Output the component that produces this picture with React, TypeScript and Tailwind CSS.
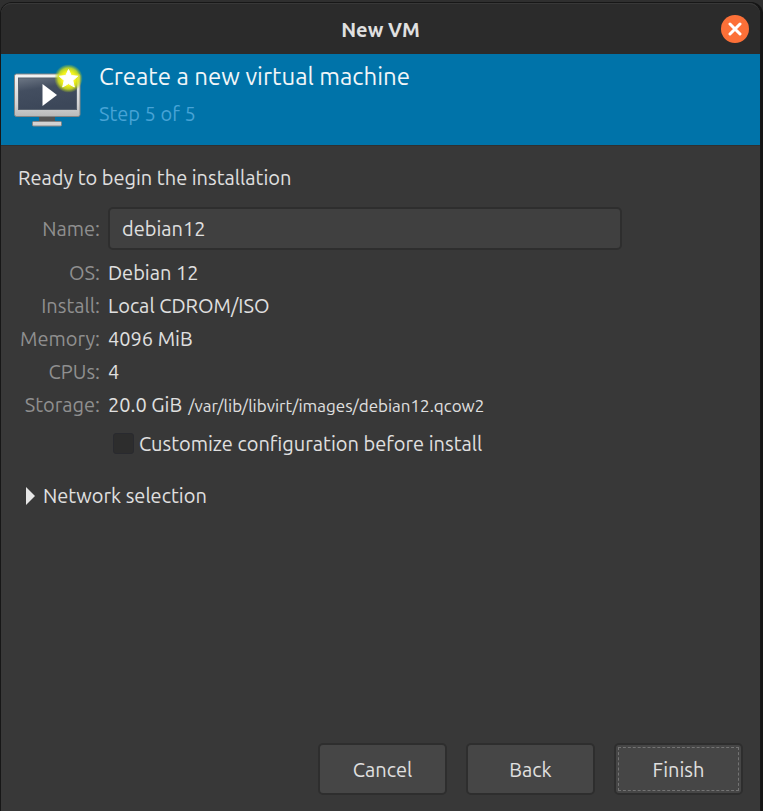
import { useState } from "react";

const details = [
  { label: "OS:", value: "Debian 12" },
  { label: "Install:", value: "Local CDROM/ISO" },
  { label: "Memory:", value: "4096 MiB" },
  { label: "CPUs:", value: "4" },
  { label: "Storage:", value: "20.0 GiB", path: "/var/lib/libvirt/images/debian12.qcow2" },
];

const buttonStyle =
  "h-[52px] w-[129px] rounded-[5px] border-2 border-[#2e2e2e] bg-[#464646] p-[2px] text-[#e0e0e0]";

function MachineIcon() {
  return (
    <svg className="mt-[2px] h-[70px] w-[76px] shrink-0" viewBox="0 0 76 70" aria-hidden="true">
      <defs>
        <linearGradient id="frame" x1="0" y1="0" x2="0" y2="1">
          <stop offset="0" stopColor="#f4f4f4" />
          <stop offset="0.7" stopColor="#d4d4d4" />
          <stop offset="1" stopColor="#b9b9b9" />
        </linearGradient>
        <linearGradient id="screen" x1="0" y1="0" x2="0.3" y2="1">
          <stop offset="0" stopColor="#6d7785" />
          <stop offset="0.4" stopColor="#434e60" />
          <stop offset="1" stopColor="#3c4759" />
        </linearGradient>
        <radialGradient id="glow">
          <stop offset="0" stopColor="#ffffa0" />
          <stop offset="0.5" stopColor="#f2f21a" />
          <stop offset="0.75" stopColor="#d5e21c" stopOpacity="0.85" />
          <stop offset="1" stopColor="#a6c926" stopOpacity="0.1" />
        </radialGradient>
      </defs>
      <path d="M29 53h16v6H29z" fill="#555" />
      <rect x="22.5" y="58.5" width="29" height="4.5" rx="1" fill="#d2d2d2" stroke="#858585" />
      <rect x="4.5" y="11" width="65.5" height="42.500" rx="2" fill="url(#frame)" stroke="#858585" />
      <rect x="8.5" y="15" width="58" height="31.500" fill="url(#screen)" stroke="#56606d" />
      <path d="M32.5 21v22L47 32z" fill="#fff" />
      <circle cx="58.500" cy="15.500" r="14" fill="url(#glow)" />
      <path
        d="M58.500 6.500l2.700 6 6.500.7-4.900 4.300 1.500 6.500-5.800-3.400-5.800 3.400 1.500-6.500-4.900-4.300 6.500-.7z"
        fill="#fff"
        stroke="#fff"
        strokeLinejoin="round"
      />
    </svg>
  );
}

export default function App() {
  const [name, setName] = useState("debian12");
  const [customize, setCustomize] = useState(false);
  const [open, setOpen] = useState(false);

  return (
    <div className="flex min-h-screen flex-col bg-[#2f2f2f] pt-[2px] pr-[2px] font-['Ubuntu','Noto_Sans',sans-serif] text-[20px] leading-[27px] text-[#e0e0e0]">
      <div className="flex flex-1 flex-col rounded-t-[12px] border border-b-0 border-[#171717] bg-[#383838] shadow-[2px_0_0_#151515]">
        <header className="grid h-[51px] shrink-0 grid-cols-[1fr_auto_1fr] items-center rounded-t-[11px] border-t border-[#383838] bg-[#2b2b2b] px-[11px]">
          <h1 className="col-start-2 font-bold">New VM</h1>
          <button
            type="button"
            aria-label="Close"
            className="flex size-[28px] items-center justify-center justify-self-end rounded-full bg-[#fc7038]"
          >
            <svg className="size-[14px]" viewBox="0 0 14 14" aria-hidden="true">
              <path d="M2 2l10 10M12 2L2 12" stroke="#fff" strokeWidth="3" strokeLinecap="round" />
            </svg>
          </button>
        </header>

        <section className="flex h-[91px] shrink-0 items-start gap-[13px] bg-[#0073a9] px-[9px] pt-[7px]">
          <MachineIcon />
          <div>
            <h2 className="text-[24px] leading-[32px] text-[#f2f6f8]">Create a new virtual machine</h2>
            <p className="mt-[7px] text-[#47a3d6]">Step 5 of 5</p>
          </div>
        </section>

        <main className="flex flex-1 flex-col border-t border-[#303030] px-[17px] pt-[18px] pb-[16px]">
          <p>Ready to begin the installation</p>

          <div className="mt-[16px] grid grid-cols-[82px_1fr] items-center gap-x-[8px]">
            <label htmlFor="vm-name" className="text-right text-[#8f8f8f]">
              Name:
            </label>
            <input
              id="vm-name"
              value={name}
              onChange={(event) => setName(event.target.value)}
              className="h-[43px] w-full max-w-[514px] rounded-[5px] border-2 border-[#2e2e2e] bg-[#404040] px-[12px] outline-none"
            />
          </div>

          <dl className="mt-[6px]">
            {details.map((row) => (
              <div key={row.label} className="grid h-[33px] grid-cols-[82px_1fr] items-center gap-x-[8px]">
                <dt className="text-right text-[#8f8f8f]">{row.label}</dt>
                <dd className="flex items-baseline gap-[6px]">
                  {row.value}
                  {row.path && <span className="text-[17px]">{row.path}</span>}
                </dd>
              </div>
            ))}
          </dl>

          <label className="mt-[9px] ml-[95px] flex items-center gap-[5px] self-start">
            <input
              type="checkbox"
              checked={customize}
              onChange={(event) => setCustomize(event.target.checked)}
              className="size-[21px] appearance-none rounded-[3px] border border-[#292a2f] bg-[#2d2d2d] checked:bg-[#fc7038]"
            />
            Customize configuration before install
          </label>

          <button
            type="button"
            aria-expanded={open}
            onClick={() => setOpen(!open)}
            className="mt-[25px] ml-[8px] flex items-center gap-[8px] self-start"
          >
            <svg className="h-[18px] w-[9px]" viewBox="0 0 9 18" aria-hidden="true">
              <path d="M0 0v18l9-9z" fill="#e6e6e6" />
            </svg>
            Network selection
          </button>

          <footer className="mt-auto flex justify-end gap-[19px]">
            <button type="button" className={buttonStyle}>
              Cancel
            </button>
            <button type="button" className={buttonStyle}>
              Back
            </button>
            <button type="button" className={buttonStyle}>
              <span className="flex h-full items-center justify-center border border-dashed border-[#737373]">
                Finish
              </span>
            </button>
          </footer>
        </main>
      </div>
    </div>
  );
}
